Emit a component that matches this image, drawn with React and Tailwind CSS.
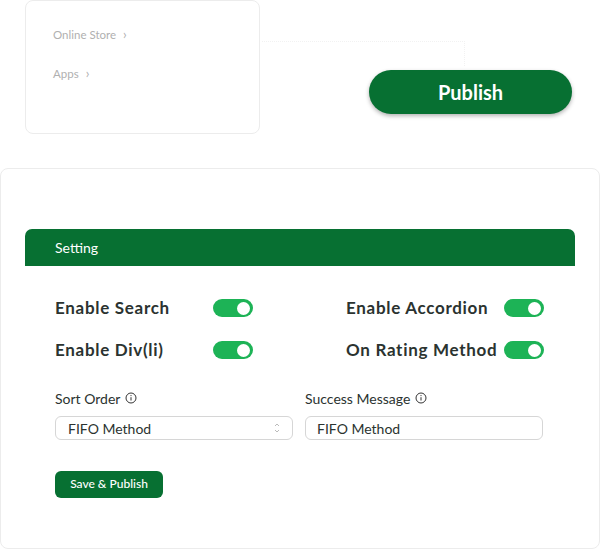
import { useState } from "react";

function Toggle({ on, onClick }) {
  return (
    <button
      onClick={onClick}
      className={`flex h-[18px] w-[40px] items-center rounded-full px-[3px] ${on ? "justify-end bg-[#1db356]" : "justify-start bg-gray-300"}`}
    >
      <span className="block h-[13px] w-[13px] rounded-full bg-white" />
    </button>
  );
}

function Info() {
  return (
    <svg width="12" height="12" viewBox="0 0 12 12" fill="none" className="ml-[5px]">
      <circle cx="6" cy="6" r="5" stroke="#333" strokeWidth="1" />
      <line x1="6" y1="5.2" x2="6" y2="8.5" stroke="#333" strokeWidth="1" />
      <circle cx="6" cy="3.6" r="0.6" fill="#333" />
    </svg>
  );
}

function App() {
  // Réglages
  const [flags, setFlags] = useState({ search: true, accordion: true, div: true, rating: true });
  const [message, setMessage] = useState("FIFO Method");

  const flip = (k) => setFlags({ ...flags, [k]: !flags[k] });

  const rows = [
    [["Enable Search", "search"], ["Enable Accordion", "accordion"]],
    [["Enable Div(li)", "div"], ["On Rating Method", "rating"]],
  ];

  return (
    <div className="relative h-[549px] w-[600px] overflow-hidden bg-white font-['Lato',sans-serif] text-[#2b3330]">
      {/* Haut */}
      <div className="flex">
        <div className="ml-[25px] h-[134px] w-[235px] rounded-lg border border-[#ececec] pl-[27px] pt-[26px] text-[11.5px] text-[#b0b0b0]">
          <div className="flex h-[16px] items-center">Online Store <span className="ml-[7px] text-[13px]">›</span></div>
          <div className="mt-[23px] flex h-[16px] items-center">Apps <span className="ml-[7px] text-[13px]">›</span></div>
        </div>
        <div className="absolute left-[262px] top-[41px] h-[25px] w-[203px] border-r border-t border-dotted border-[#f2f2f2]" />
        <div className="ml-[109px] pt-[70px]">
          <button className="h-[44px] w-[203px] rounded-full bg-[#077032] text-[20px] font-bold text-white shadow-[0_2px_4px_rgba(0,0,0,0.3)]">
            Publish
          </button>
        </div>
      </div>

      {/* Carte réglages */}
      <div className="mt-[34px] h-[381px] w-[600px] rounded-lg border border-[#ececec] px-[24px] pt-[60px]">
        <div className="flex h-[37px] items-center rounded-t-[7px] bg-[#077032] pl-[30px] text-[14px] text-white">
          Setting
        </div>

        <div className="mt-[30px] flex flex-col gap-[18px] pl-[30px]">
          {rows.map((r, i) => (
            <div key={i} className="flex h-[24px] items-center">
              {r.map(([label, k], j) => (
                <div key={k} className={`flex items-center ${j === 0 ? "w-[291px]" : ""}`}>
                  <span className="w-[158px] whitespace-nowrap text-[17px] font-bold tracking-[0.7px]">{label}</span>
                  <Toggle on={flags[k]} onClick={() => flip(k)} />
                </div>
              ))}
            </div>
          ))}
        </div>

        <div className="mt-[26px] flex gap-[12px] pl-[30px]">
          <div className="w-[238px]">
            <div className="flex h-[20px] items-center text-[14px]">Sort Order <Info /></div>
            <div className="mt-[8px] flex h-[24px] items-center justify-between rounded-md border border-[#d6d6d6] pl-[12px] pr-[12px] text-[14px]">
              <span>FIFO Method</span>
              <svg width="6" height="12" viewBox="0 0 6 12" fill="none">
                <path d="M1 4 L3 2 L5 4" stroke="#aaa" strokeWidth="0.8" />
                <path d="M1 8 L3 10 L5 8" stroke="#aaa" strokeWidth="0.8" />
              </svg>
            </div>
          </div>
          <div className="w-[238px]">
            <div className="flex h-[20px] items-center text-[14px]">Success Message <Info /></div>
            <input
              value={message}
              onChange={(e) => setMessage(e.target.value)}
              className="mt-[8px] h-[24px] w-full rounded-md border border-[#d6d6d6] px-[11px] text-[14px] outline-none"
            />
          </div>
        </div>

        <div className="mt-[30px] pl-[30px]">
          <button className="h-[27px] w-[108px] rounded-md bg-[#077032] text-[12px] font-medium text-white">
            Save &amp; Publish
          </button>
        </div>
      </div>
    </div>
  );
}

export default App;
